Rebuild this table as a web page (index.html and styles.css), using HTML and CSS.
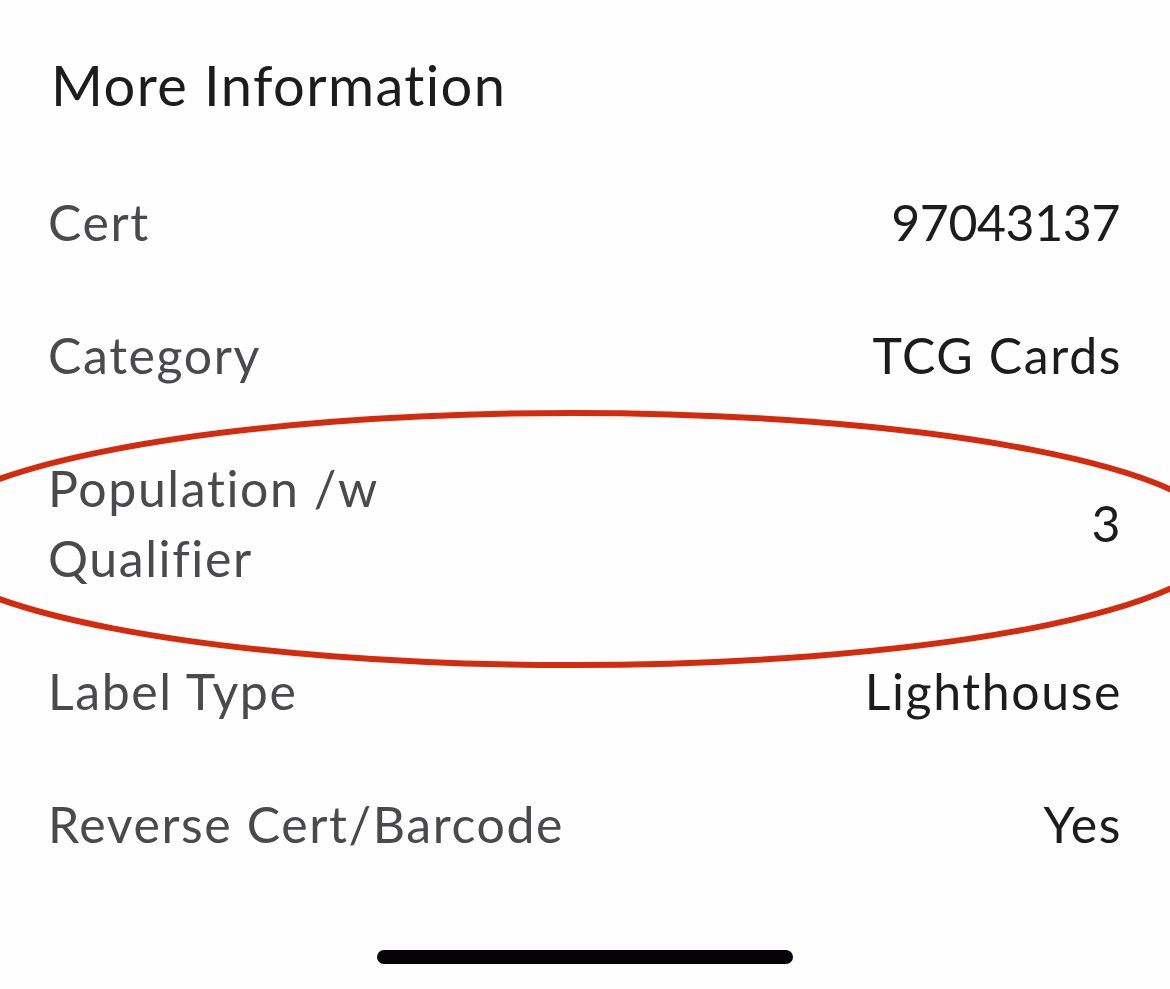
FILE: index.html
```html
<!DOCTYPE html>
<html lang="en">
<head>
<meta charset="utf-8">
<title>More Information</title>
<link rel="stylesheet" href="styles.css">
</head>
<body>
<div class="page">
  <h1 class="title">More Information</h1>
  <div class="rows">
    <div class="row"><span class="label">Cert</span><span class="value value-num">97043137</span></div>
    <div class="row"><span class="label">Category</span><span class="value">TCG Cards</span></div>
    <div class="row"><span class="label label-wrap">Population /w Qualifier</span><span class="value">3</span></div>
    <div class="row"><span class="label">Label Type</span><span class="value">Lighthouse</span></div>
    <div class="row"><span class="label">Reverse Cert/Barcode</span><span class="value">Yes</span></div>
  </div>
  <div class="home"><div class="home-bar"></div></div>
  <svg class="annotation" width="1170" height="989" viewBox="0 0 1170 989">
    <ellipse cx="572" cy="539" rx="651" ry="126" fill="none" stroke="#d42a0e" stroke-width="6"/>
  </svg>
</div>
</body>
</html>
```

FILE: styles.css
```css
html, body {
  margin: 0;
  padding: 0;
  background: #fefefe;
}

.page {
  position: relative;
  width: 1170px;
  height: 989px;
  overflow: hidden;
  font-family: Lato, "Noto Sans", sans-serif;
  font-variant-ligatures: none;
  display: flex;
  flex-direction: column;
}

.title {
  margin: 0;
  padding: 50px 50px 0 51px;
  font-size: 56px;
  line-height: 70px;
  font-weight: 400;
  letter-spacing: 1.4px;
  color: #1c1c1c;
}

.rows {
  margin-top: 35px;
  display: flex;
  flex-direction: column;
}

.row {
  display: flex;
  justify-content: space-between;
  align-items: center;
  padding: 31.5px 48px 31.5px 48px;
  font-size: 50px;
  line-height: 70px;
  letter-spacing: 1.6px;
}

.label {
  color: #4a4a4c;
}

.label-wrap {
  max-width: 350px;
}

.value {
  color: #1c1c1c;
  text-align: right;
}

.value-num {
  letter-spacing: -0.4px;
  margin-right: 2px;
}

.home {
  margin-top: 60px;
  display: flex;
  justify-content: center;
}

.home-bar {
  width: 416px;
  height: 14px;
  border-radius: 7px;
  background: #050308;
}

.annotation {
  position: absolute;
  left: 0;
  top: 0;
  pointer-events: none;
}
```
